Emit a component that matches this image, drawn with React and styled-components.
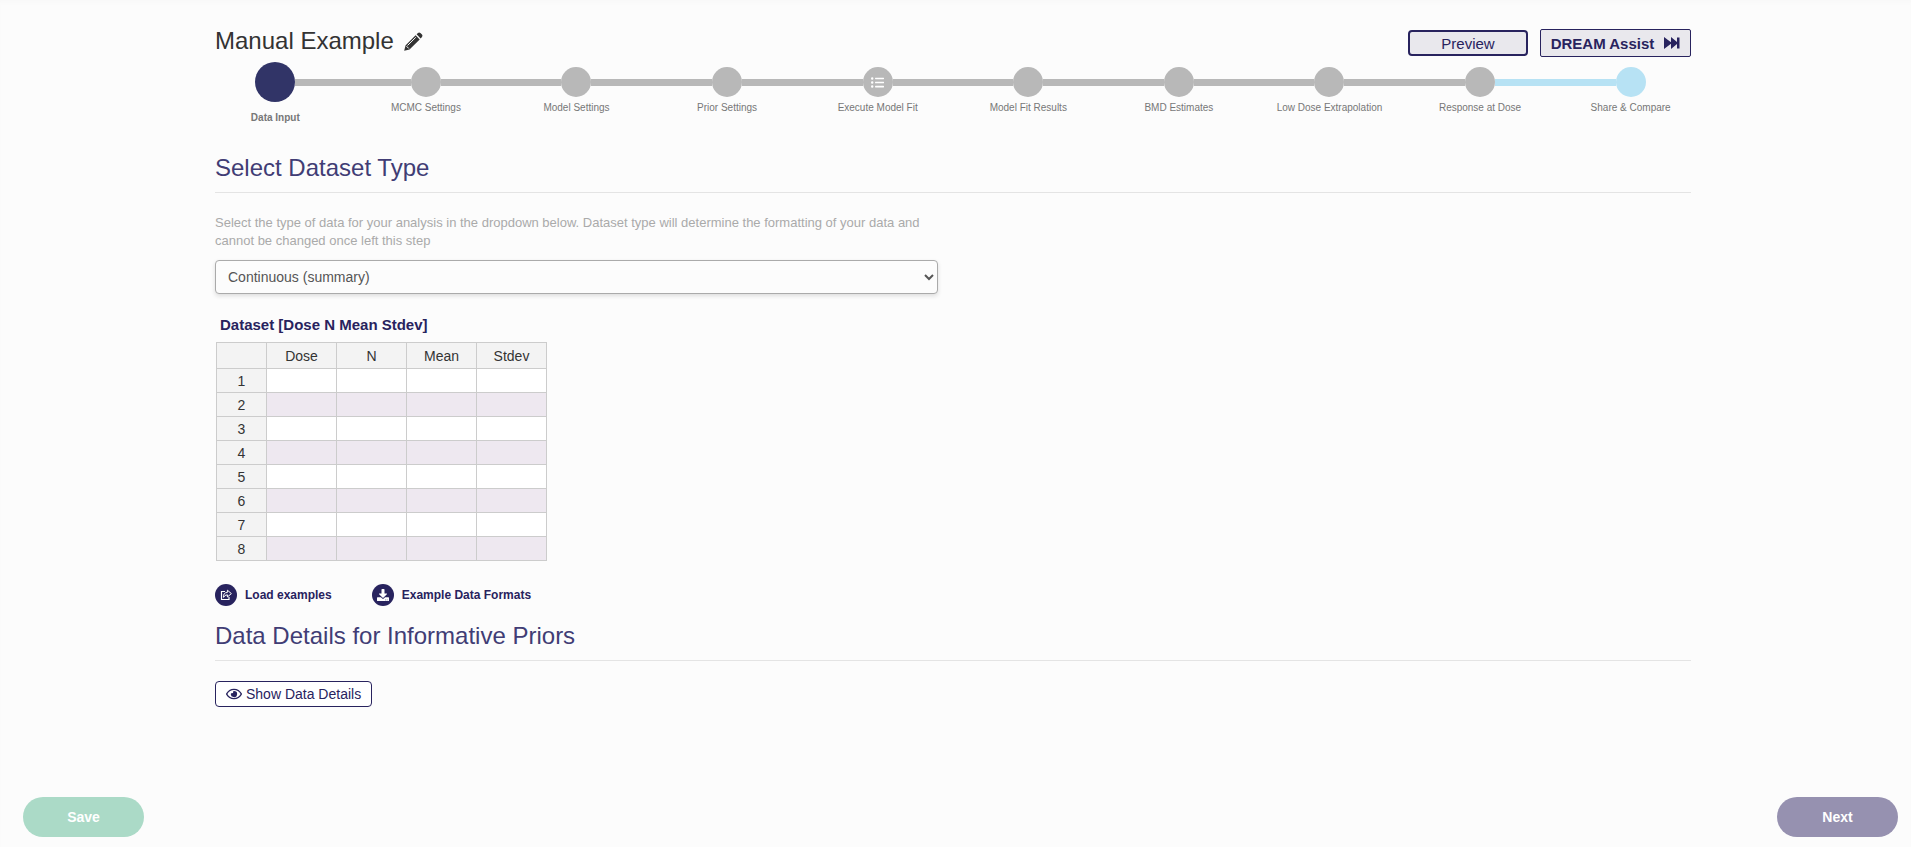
import React from 'react';
import styled, { createGlobalStyle } from 'styled-components';
import { FaDownload, FaListUl, FaRegEye } from 'react-icons/fa';

const GlobalStyle = createGlobalStyle`
  * {
    box-sizing: border-box;
  }

  body {
    margin: 0;
    min-height: 100vh;
    background: #fcfcfc;
    color: #333;
    font: 14px/20px "Liberation Sans", Arial, sans-serif;
  }

  button,
  select {
    font-family: inherit;
  }
`;

const navy = '#28235e';

const Page = styled.div`
  display: flex;
  flex-direction: column;
  min-height: 100vh;
  box-shadow: inset 0 4px 4px -2px #f8f8f8;
`;

const Content = styled.main`
  flex: 1;
  padding: 26px 220px 0 215px;
`;

const Header = styled.header`
  display: flex;
  align-items: center;
  justify-content: space-between;
  height: 32px;
`;

const Title = styled.h1`
  display: flex;
  align-items: center;
  gap: 10px;
  margin: 0;
  padding-bottom: 2px;
  font-size: 24px;
  font-weight: 400;
  line-height: 30px;
`;

const IconButton = styled.button`
  display: flex;
  padding: 0;
  border: 0;
  background: none;
  color: #333;
  cursor: pointer;
`;

const Actions = styled.div`
  display: flex;
  align-items: center;
  gap: 12px;
  padding-top: 2px;
`;

const ActionButton = styled.button`
  display: flex;
  align-items: center;
  justify-content: center;
  gap: 10px;
  height: ${props => props.$strong ? '28px' : '26px'};
  width: ${props => props.$strong ? '151px' : '120px'};
  padding: 0;
  border: ${props => props.$strong ? '1px' : '2px'} solid ${navy};
  border-radius: ${props => props.$strong ? '2px' : '4px'};
  background: #e9e8ed;
  color: ${navy};
  font-size: 15px;
  font-weight: ${props => props.$strong ? 'bold' : 'normal'};
  cursor: pointer;
`;

const Steps = styled.ol`
  display: flex;
  margin: 4px -15px 0;
  padding: 0;
  list-style: none;
`;

const Step = styled.li`
  flex: 1;
  text-align: center;
  color: #777;
  font-size: 10px;
  font-weight: ${props => props.$active ? 'bold' : 'normal'};
  line-height: 14px;
  padding-top: ${props => props.$active ? '0' : '5px'};
`;

const Track = styled.div`
  display: flex;
  align-items: center;
  margin-bottom: ${props => props.$active ? '9px' : '4px'};
`;

const Line = styled.span`
  flex: 1;
  height: 7px;
  background: ${props => props.$color};
`;

const Dot = styled.span`
  display: flex;
  align-items: center;
  justify-content: center;
  width: ${props => props.$size};
  height: ${props => props.$size};
  border-radius: 50%;
  background: ${props => props.$color};
  color: #fff;
  font-size: 13px;
`;

const SectionTitle = styled.h2`
  margin: 0 0 21px;
  padding-bottom: 9px;
  border-bottom: 1px solid #e4e4e4;
  color: #413d75;
  font-size: 24px;
  font-weight: 400;
  line-height: 30px;
`;

const DatasetSection = styled.section`
  margin-top: 28px;
`;

const Field = styled.div`
  width: 49%;
`;

const Help = styled.label`
  display: block;
  max-width: 720px;
  margin-bottom: 10px;
  color: #aaa;
  font-size: 13px;
  line-height: 18px;
`;

const Select = styled.select`
  display: block;
  width: 100%;
  height: 34px;
  padding: 0 8px;
  border: 1px solid #aaa;
  border-radius: 4px;
  background: #fcfcfc;
  box-shadow: 0 2px 4px #ddd;
  color: #555;
  font-size: 14px;
`;

const Sheet = styled.table`
  margin: 21px 0 0 1px;
  border-collapse: collapse;
  table-layout: fixed;
  width: 331px;

  caption {
    padding: 0 4px 7px;
    color: ${navy};
    font-size: 15px;
    font-weight: bold;
    text-align: left;
  }

  th,
  td {
    height: 24px;
    padding: 0;
    border: 1px solid #ccc;
    font-weight: 400;
    line-height: 20px;
  }

  th {
    background: #f3f3f3;
  }

  thead th {
    width: 70px;
    height: 26px;
  }

  thead th:first-child {
    width: 50px;
  }

  td {
    background: #fff;
  }

  tr:nth-child(even) td {
    background: #eee8f0;
  }
`;

const Links = styled.div`
  display: flex;
  gap: 40px;
  margin: 23px 0 15px;
`;

const TextButton = styled.button`
  display: flex;
  align-items: center;
  gap: 8px;
  padding: 0;
  border: 0;
  background: none;
  color: ${navy};
  font-size: 12px;
  font-weight: bold;
  cursor: pointer;
`;

const Badge = styled.span`
  display: flex;
  align-items: center;
  justify-content: center;
  width: 22px;
  height: 22px;
  border-radius: 50%;
  background: ${navy};
  color: #fff;
`;

const DetailsButton = styled.button`
  display: flex;
  align-items: center;
  gap: 4px;
  height: 26px;
  margin-top: -1px;
  padding: 0 10px;
  border: 1px solid ${navy};
  border-radius: 4px;
  background: #fff;
  color: ${navy};
  font-size: 14px;
  cursor: pointer;
`;

const Footer = styled.footer`
  display: flex;
  justify-content: space-between;
  padding: 0 13px 10px 23px;
`;

const PillButton = styled.button`
  width: 121px;
  height: 40px;
  border: 0;
  border-radius: 20px;
  background: ${props => props.$color};
  color: #fff;
  font-size: 14px;
  font-weight: bold;
  cursor: pointer;
`;

const gray = '#b8b8b8';
const blue = '#b7e2f4';

const steps = [
  { label: 'Data Input', active: true, left: 'transparent', dot: '#313467' },
  { label: 'MCMC Settings' },
  { label: 'Model Settings' },
  { label: 'Prior Settings' },
  { label: 'Execute Model Fit', icon: <FaListUl /> },
  { label: 'Model Fit Results' },
  { label: 'BMD Estimates' },
  { label: 'Low Dose Extrapolation' },
  { label: 'Response at Dose', right: blue },
  { label: 'Share & Compare', left: blue, right: 'transparent', dot: blue },
];

const rows = [1, 2, 3, 4, 5, 6, 7, 8];
const columns = ['Dose', 'N', 'Mean', 'Stdev'];

const PencilIcon = () => (
  <svg width="19" height="19" viewBox="0 0 19 19" fill="currentColor" aria-hidden="true">
    <path d="M12.6 2.3 14 .9Q15.2 0 16.4 1L18 2.6Q19 3.8 18 5l-1.4 1.4zM11.6 3.3l4.1 4.1L5.5 17.5.2 18.8 1.5 13.4z" />
    <path d="m3.5 13.5 8.3-8.2M2.5 14.2l2.3 2.3" fill="none" stroke="#fcfcfc" strokeWidth="1" />
  </svg>
);

const ForwardIcon = () => (
  <svg width="16" height="12" viewBox="0 0 16 12" fill="currentColor" aria-hidden="true">
    <path d="M0 0 7 5.2V0l6 5V.5h2.5v11H13V7l-6 5V6.8L0 12z" />
  </svg>
);

const ShareIcon = () => (
  <svg width="12" height="12" viewBox="0 0 12 12" aria-hidden="true">
    <path d="M5 2.5H1.5v8h7.5V8" fill="none" stroke="currentColor" strokeWidth="1.2" />
    <path d="M3.6 8.4Q3 3.6 7.4 3.4V1.2L11.4 4.6 7.4 8V5.8Q4.6 5.8 3.6 8.4z" fill="none" stroke="currentColor" strokeWidth="1" />
  </svg>
);

function Stepper() {
  return (
    <Steps>
      {steps.map(step => (
        <Step key={step.label} $active={step.active}>
          <Track $active={step.active}>
            <Line $color={step.left || gray} />
            <Dot $size={step.active ? '40px' : '30px'} $color={step.dot || gray}>{step.icon}</Dot>
            <Line $color={step.right || gray} />
          </Track>
          {step.label}
        </Step>
      ))}
    </Steps>
  );
}

function DataSheet() {
  return (
    <Sheet>
      <caption>Dataset [Dose N Mean Stdev]</caption>
      <thead>
        <tr>
          <th />
          {columns.map(name => <th key={name} scope="col">{name}</th>)}
        </tr>
      </thead>
      <tbody>
        {rows.map(row => (
          <tr key={row}>
            <th scope="row">{row}</th>
            {columns.map(name => <td key={name} />)}
          </tr>
        ))}
      </tbody>
    </Sheet>
  );
}

function App() {
  return (
    <Page>
      <GlobalStyle />
      <Content>
        <Header>
          <Title>
            Manual Example
            <IconButton aria-label="Edit name"><PencilIcon /></IconButton>
          </Title>
          <Actions>
            <ActionButton>Preview</ActionButton>
            <ActionButton $strong>DREAM Assist <ForwardIcon /></ActionButton>
          </Actions>
        </Header>
        <Stepper />
        <DatasetSection>
          <SectionTitle>Select Dataset Type</SectionTitle>
          <Field>
            <Help htmlFor="dataset-type">
              Select the type of data for your analysis in the dropdown below. Dataset type will determine the formatting of your data and cannot be changed once left this step
            </Help>
            <Select id="dataset-type">
              <option>Continuous (summary)</option>
            </Select>
          </Field>
          <DataSheet />
          <Links>
            <TextButton><Badge><ShareIcon /></Badge>Load examples</TextButton>
            <TextButton><Badge><FaDownload size={12} /></Badge>Example Data Formats</TextButton>
          </Links>
        </DatasetSection>
        <section>
          <SectionTitle>Data Details for Informative Priors</SectionTitle>
          <DetailsButton><FaRegEye size={16} />Show Data Details</DetailsButton>
        </section>
      </Content>
      <Footer>
        <PillButton $color="#abdac7">Save</PillButton>
        <PillButton $color="#9691b0">Next</PillButton>
      </Footer>
    </Page>
  );
}

export default App;
